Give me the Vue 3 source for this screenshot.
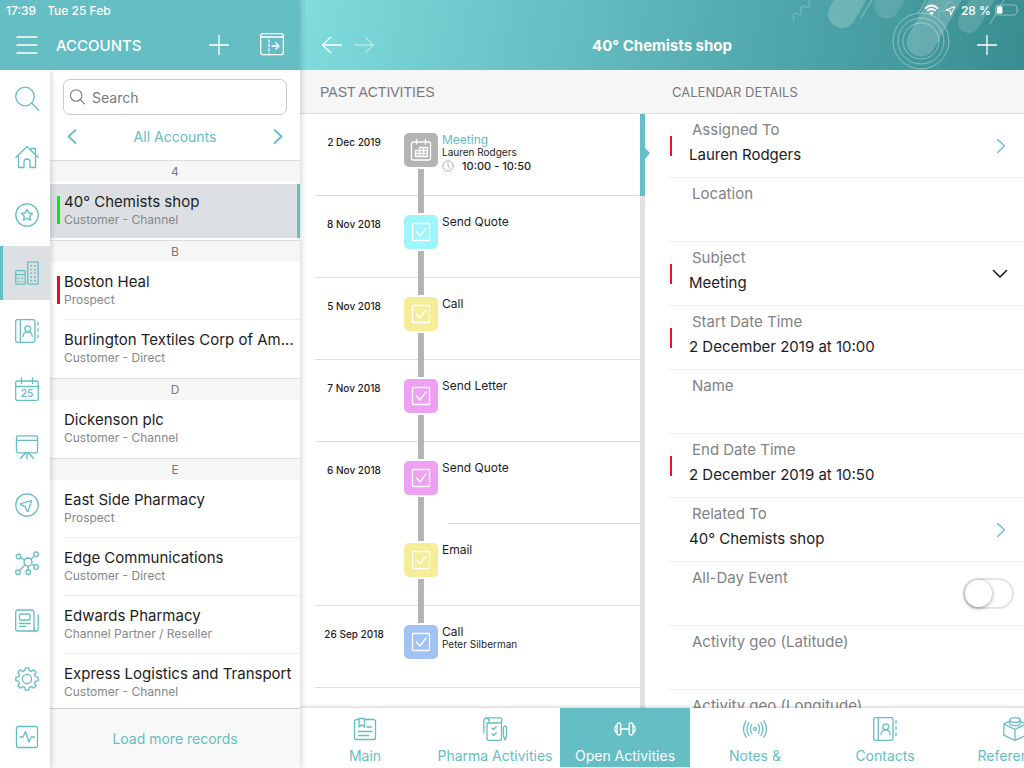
<script setup>
import { ref } from 'vue'

const icons = {
  menu: '<path d="M2 4h20M2 12h20M2 20h20"/>',
  plus: '<path d="M12 2.500v19M2.500 12h19"/>',
  panel: '<rect x=".7" y=".7" width="22.600" height="21" rx="2"/><path d="M1 4h22"/><path d="M9 7v15" stroke-dasharray="2 2.500"/><path d="M12 13h7M15.800 9.800l3.200 3.200-3.200 3.200"/>',
  search: '<circle cx="10" cy="9.500" r="9.300"/><path d="M16.700 16.300l7 7"/>',
  home: '<path d="M.8 12.500L12 1.500l11.200 11M16 5l0-1.500h4.500v5.500M3.500 11.500v11h5.500v-5.500a3 3 0 0 1 6 0v5.500h5.500v-11"/>',
  star: '<circle cx="12" cy="12" r="11.200"/><path d="M12 6.400l1.700 3.600 3.900.5-2.900 2.700.8 3.900-3.500-1.900-3.500 1.900.8-3.900-2.900-2.700 3.900-.5z"/>',
  offices: '<rect x=".8" y="9.600" width="9.400" height="13.600" rx="1"/><path d="M1 13.600h9"/><rect x="12.800" y=".8" width="10.400" height="22.400" rx="1"/><path d="M3.700 16.600v4.500M7.300 16.600v4.500" stroke-dasharray="1.600 1.800" stroke-width="1.700" stroke-linecap="butt"/><path d="M16.200 4v16.500M19.900 4v16.500" stroke-dasharray="1.600 2.100" stroke-width="1.700" stroke-linecap="butt"/>',
  contacts: '<rect x=".7" y=".7" width="19.300" height="22.600" rx="1.800"/><path d="M5.300 1v22"/><circle cx="12.700" cy="9.700" r="2.900"/><path d="M8.200 17.500c0-6.200 9-6.200 9 0"/><path d="M23 3.300v3M23 9.600v3M23 16v2.500"/>',
  calendar: '<rect x=".7" y="4" width="22.600" height="19.300" rx="1.500"/><path d="M1 9.500h22M6.500 1v5.500M17.500 1v5.500"/><text x="12" y="19.800" text-anchor="middle" font-size="10" font-weight="600" stroke="none" fill="currentColor">25</text>',
  board: '<rect x="1.500" y=".8" width="21" height="17" rx="1.500"/><path d="M1.500 5.300h21M12 18v6M10.500 18l-5 5.500M13.500 18l5 5.500"/>',
  compass: '<circle cx="12" cy="12" r="11.200"/><path d="M16.500 7.500L5.800 10.700q-.8.500 0 1l4.400 2 2 4.400q.5.800 1 0z"/>',
  network: '<circle cx="13" cy="11" r="4"/><circle cx="3.500" cy="5.500" r="2.300"/><circle cx="21" cy="3.300" r="2.400"/><circle cx="21" cy="16" r="2.300"/><circle cx="2.900" cy="21.200" r="2.300"/><circle cx="13.300" cy="21.200" r="2.300"/><path d="M5.500 6.700l4 2.300M16 8.300l3.200-3.200M16.500 13l2.700 1.800M4.500 19.500l5.700-5.700M13.100 15v4"/>',
  news: '<path d="M19 20V3a2 2 0 0 0-2-2H2.700a2 2 0 0 0-2 2v17a2 2 0 0 0 2 2h18.500a2 2 0 0 0 2-2V6"/><path d="M19 19.500q0 2.500 2 2.500"/><rect x="4.500" y="5" width="10.500" height="6" rx="1"/><path d="M4.500 14.500h10.800M4.500 17.500h6"/>',
  gear: '<circle cx="12" cy="12" r="4.600"/><path d="M9.700 3.600L10.400 .8h3.200l.7 2.800 2 .8 2.500-1.500 2.300 2.300-1.500 2.500.8 2 2.800.7v3.200l-2.800.7-.8 2 1.500 2.500-2.300 2.300-2.500-1.500-2 .8-.7 2.800h-3.200l-.7-2.800-2-.8-2.500 1.500-2.300-2.300 1.500-2.500-.8-2L.8 13.600v-3.200l2.800-.7.8-2-1.500-2.500 2.300-2.300 2.500 1.500z"/>',
  pulse: '<rect x="1.500" y="1.500" width="21" height="21" rx="1.500"/><path d="M5 12h3l2.500-5.500 3.500 10.500 2.200-5H19.500"/>',
  prev: '<path d="M15.500 6l-7 6.500 7 6.500" stroke-width="1.800"/>',
  next: '<path d="M8.500 6l7 6.500-7 6.500" stroke-width="1.800"/>',
  thinNext: '<path d="M9.500 5.500l7 6.500-7 6.500"/>',
  down: '<path d="M5.500 8.500l6.500 6.500 6.500-6.500" stroke-width="1.600"/>',
  back: '<path d="M21.500 12h-19M10.500 4.500L2.500 12l8 7.500"/>',
  forward: '<path d="M2.500 12h19M13.500 4.500l8 7.500-8 7.500"/>',
  main: '<path d="M5.500 2.500H3.500a2 2 0 0 0-2 2v16a2 2 0 0 0 2 2h17a2 2 0 0 0 2-2v-16a2 2 0 0 0-2-2h-9"/><path d="M6 1.500h5.500V10L8.800 7.800 6 10zM14 10h4.500M5.500 14.500h13.500M5.500 18.500h10"/>',
  pharma: '<path d="M.8 16V4a3.200 3.200 0 0 1 3.200-3.200h13a2 2 0 0 1 2 2c0 2.700-2 3.200-3.500 3.200H4M4 6V21.500a1.800 1.800 0 0 0 1.800 1.800h10.900a1.800 1.800 0 0 0 1.800-1.800V5.500M4 6c3 0 3-4.500 0-4.500"/><path d="M9 11l1.500 1.500 2.700-2.700M9 17l1.500 1.500 2.700-2.700M20.500 19v-8q0-2 1.500-2t1.500 2v8L22 23z"/>',
  dumbbell: '<rect x="4" y="6" width="3.800" height="12" rx="1.800"/><rect x="16.200" y="6" width="3.800" height="12" rx="1.800"/><path d="M7.800 12h8.400M4 9H2.500q-1.500 3 0 6H4M20 9h1.500q1.500 3 0 6H20"/>',
  signal: '<circle cx="12" cy="12" r="1.500"/><path d="M8.800 7.500q-2.800 4.500 0 9M15.200 7.500q2.800 4.500 0 9M6 5.500q-4 6.500 0 13M18 5.500q4 6.500 0 13M3 3.800q-5 8.200 0 16.400M21 3.800q5 8.200 0 16.400"/>',
  brick: '<path d="M6.500 4.300L.8 7v11.200L12 23.500l11.200-5.300V7l-5.700-2.700M.8 7L12 12.300 23.200 7M12 12.300v11.200"/><ellipse cx="12" cy="3" rx="5.200" ry="2.300"/><path d="M6.800 3v3.200c0 3.200 10.400 3.200 10.400 0V3"/>',
  event: '<rect x="2.500" y="4" width="19" height="18" rx="1.500"/><path d="M7.500 1.500V6M16.500 1.500V6"/><path d="M10.500 9.500h8v9h-12v-6h12M10.500 9.500v9M14.500 9.500v9M6.500 15.500h12"/>',
  task: '<rect x="3.500" y="3.500" width="17" height="17" rx=".8"/><path d="M7.500 12l3.500 4 6-8"/>',
  clock: '<circle cx="12" cy="12" r="10.500"/><path d="M12 5v7l4 5"/>'
}

const rail = [
  ['search', 'Search'], ['home', 'Home'], ['star', 'Favourites'], ['offices', 'Accounts'],
  ['contacts', 'Contacts'], ['calendar', 'Calendar'], ['board', 'Presentations'], ['compass', 'Nearby'],
  ['network', 'Network'], ['news', 'News'], ['gear', 'Settings'], ['pulse', 'Activity']
]

const groups = [
  { letter: '4', items: [{ name: '40° Chemists shop', type: 'Customer - Channel', flag: 'green', active: true }] },
  { letter: 'B', items: [
    { name: 'Boston Heal', type: 'Prospect', flag: 'red' },
    { name: 'Burlington Textiles Corp of America', type: 'Customer - Direct' }
  ] },
  { letter: 'D', items: [{ name: 'Dickenson plc', type: 'Customer - Channel' }] },
  { letter: 'E', items: [
    { name: 'East Side Pharmacy', type: 'Prospect' },
    { name: 'Edge Communications', type: 'Customer - Direct' },
    { name: 'Edwards Pharmacy', type: 'Channel Partner / Reseller' },
    { name: 'Express Logistics and Transport', type: 'Customer - Channel' }
  ] }
]

const activities = [
  { date: '2 Dec 2019', title: 'Meeting', who: 'Lauren Rodgers', time: '10:00 - 10:50', tone: 'grey', icon: 'event', active: true },
  { date: '8 Nov 2018', title: 'Send Quote', tone: 'cyan', icon: 'task' },
  { date: '5 Nov 2018', title: 'Call', tone: 'yellow', icon: 'task' },
  { date: '7 Nov 2018', title: 'Send Letter', tone: 'pink', icon: 'task' },
  { date: '6 Nov 2018', title: 'Send Quote', tone: 'pink', icon: 'task', grouped: true },
  { date: '', title: 'Email', tone: 'yellow', icon: 'task' },
  { date: '26 Sep 2018', title: 'Call', who: 'Peter Silberman', tone: 'blue', icon: 'task' }
]

const fields = ref([
  { id: 'assigned', label: 'Assigned To', value: 'Lauren Rodgers', required: true, kind: 'lookup' },
  { id: 'location', label: 'Location', value: '' },
  { id: 'subject', label: 'Subject', value: 'Meeting', required: true, kind: 'select' },
  { id: 'start', label: 'Start Date Time', value: '2 December 2019 at 10:00', required: true },
  { id: 'name', label: 'Name', value: '' },
  { id: 'end', label: 'End Date Time', value: '2 December 2019 at 10:50', required: true },
  { id: 'related', label: 'Related To', value: '40° Chemists shop', kind: 'lookup' },
  { id: 'allday', label: 'All-Day Event', value: false, kind: 'toggle' },
  { id: 'lat', label: 'Activity geo (Latitude)', value: '' },
  { id: 'lng', label: 'Activity geo (Longitude)', value: '' }
])

const tabs = [
  ['main', 'Main'], ['pharma', 'Pharma Activities'], ['dumbbell', 'Open Activities'],
  ['signal', 'Notes &'], ['contacts', 'Contacts'], ['brick', 'References']
]
const query = ref('')
</script>

<template>
  <div class="app">
    <section class="side">
      <header class="side-head">
        <div class="status"><span>17:39</span><span>Tue 25 Feb</span></div>
        <div class="side-bar">
          <button class="bare" aria-label="Menu"><svg class="ico" viewBox="0 0 24 24" v-html="icons.menu" /></button>
          <h1>ACCOUNTS</h1>
          <button class="bare" aria-label="Add account"><svg class="ico" viewBox="0 0 24 24" v-html="icons.plus" /></button>
          <button class="bare" aria-label="Toggle panel"><svg class="ico" viewBox="0 0 24 24" v-html="icons.panel" /></button>
        </div>
      </header>
      <div class="side-body">
        <nav class="rail">
          <button v-for="[icon, label] in rail" :key="label" class="bare rail-item" :class="{ active: icon === 'offices' }" :aria-label="label">
            <svg class="ico" viewBox="0 0 24 24" v-html="icons[icon]" />
          </button>
        </nav>
        <div class="list">
          <label class="search">
            <svg class="ico small" viewBox="0 -1 26 26" v-html="icons.search" />
            <input v-model="query" type="search" placeholder="Search" aria-label="Search accounts">
          </label>
          <div class="filter">
            <button class="bare" aria-label="Previous view"><svg class="ico" viewBox="0 0 24 24" v-html="icons.prev" /></button>
            <a href="#">All Accounts</a>
            <button class="bare" aria-label="Next view"><svg class="ico" viewBox="0 0 24 24" v-html="icons.next" /></button>
          </div>
          <div class="records">
            <section v-for="g in groups" :key="g.letter">
              <h2>{{ g.letter }}</h2>
              <a v-for="a in g.items" :key="a.name" href="#" class="record" :class="[a.flag, { active: a.active }]">
                <strong>{{ a.name }}</strong>
                <span>{{ a.type }}</span>
              </a>
            </section>
          </div>
          <footer class="more"><a href="#">Load more records</a></footer>
        </div>
      </div>
    </section>

    <main class="content">
      <header class="top">
        <svg class="decor" viewBox="0 0 234 70" aria-hidden="true">
          <g stroke="#fff" stroke-linecap="round" fill="none">
            <path d="M52 14L74-24" stroke-width="28" opacity=".2" />
            <path d="M97 6L115-24" stroke-width="25" opacity=".12" />
            <path d="M131 42L169-24" stroke-width="29" opacity=".2" />
            <path d="M179 22L206-24" stroke-width="22" opacity=".15" />
            <g opacity=".4">
              <circle cx="131" cy="41" r="28" /><circle cx="131" cy="41" r="23" /><circle cx="131" cy="41" r="18" />
              <path d="M71 18L83-2M200 24L215-2M128 14L138-4" />
              <path d="M4 20c-2-5 1-8 4-6s4-1 3-4 2-5 5-3 4-2 3-7" opacity=".7" />
              <path d="M149 16c-2-5 1-6 4-5s4-1 3-4 2-5 5-5" opacity=".6" />
            </g>
          </g>
        </svg>
        <div class="status right">
          <svg class="wifi" viewBox="0 0 16 12"><path d="M1 4.500q7-6.500 14 0M3.500 7q4.500-4.200 9 0" fill="none" stroke="#fff" stroke-width="2" /><path d="M5.500 9q2.500-2.200 5 0L8 11.500z" fill="#fff" /></svg>
          <svg class="loc" viewBox="0 0 12 12"><path d="M10.500 1.500L1 5.800l4.700.5.500 4.700z" fill="none" stroke="#fff" stroke-width="1.100" stroke-linejoin="round" /></svg>
          <span>28 %</span>
          <svg class="battery" viewBox="0 0 27 12"><rect x=".5" y=".5" width="23" height="11" rx="3" fill="none" stroke="#fff" opacity=".45" /><rect x="2" y="2" width="6" height="8" rx="1.500" fill="#fff" /><path d="M25 4v4q2-2 0-4" fill="#fff" opacity=".5" /></svg>
        </div>
        <div class="top-bar">
          <div class="arrows">
            <button class="bare" aria-label="Back"><svg class="ico" viewBox="0 0 24 24" v-html="icons.back" /></button>
            <button class="bare dim" aria-label="Forward"><svg class="ico" viewBox="0 0 24 24" v-html="icons.forward" /></button>
          </div>
          <h1>40° Chemists shop</h1>
          <button class="bare add" aria-label="Add"><svg class="ico" viewBox="0 0 24 24" v-html="icons.plus" /></button>
        </div>
      </header>

      <div class="panels">
        <section class="past">
          <h2 class="caption light">PAST ACTIVITIES</h2>
          <div class="timeline">
            <article v-for="(a, i) in activities" :key="i" class="activity" :class="{ active: a.active, grouped: a.grouped }">
              <time>{{ a.date }}</time>
              <div class="track">
                <span class="badge" :class="a.tone"><svg class="ico" viewBox="0 0 24 24" v-html="icons[a.icon]" /></span>
                <i v-if="i < activities.length - 1" class="link" />
              </div>
              <div class="what">
                <h3>{{ a.title }}</h3>
                <p v-if="a.who">{{ a.who }}</p>
                <p v-if="a.time" class="time"><svg class="ico" viewBox="0 0 24 24" v-html="icons.clock" />{{ a.time }}</p>
              </div>
            </article>
          </div>
        </section>

        <section class="details">
          <h2 class="caption">CALENDAR DETAILS</h2>
          <form class="fields">
            <div v-for="f in fields" :key="f.id" class="field" :class="{ required: f.required }">
              <div class="pair">
                <label :for="f.id">{{ f.label }}</label>
                <select v-if="f.kind === 'select'" :id="f.id" v-model="f.value"><option>Meeting</option><option>Call</option><option>Email</option></select>
                <input v-else-if="f.kind !== 'toggle'" :id="f.id" v-model="f.value" type="text">
              </div>
              <input v-if="f.kind === 'toggle'" :id="f.id" v-model="f.value" type="checkbox" class="switch">
              <button v-if="f.kind === 'lookup'" type="button" class="bare" :aria-label="'Choose ' + f.label"><svg class="ico" viewBox="0 0 24 24" v-html="icons.thinNext" /></button>
              <svg v-if="f.kind === 'select'" class="ico dark" viewBox="0 0 24 24" v-html="icons.down" />
            </div>
          </form>
        </section>
      </div>

      <nav class="tabs">
        <button v-for="[icon, label] in tabs" :key="label" class="bare tab" :class="{ active: icon === 'dumbbell' }">
          <svg class="ico" viewBox="0 0 24 24" v-html="icons[icon]" />
          <span>{{ label }}</span>
        </button>
      </nav>
    </main>
  </div>
</template>

<style>
body { margin: 0; overflow: hidden; }
</style>

<style scoped>
* { box-sizing: border-box; }
.app {
  --teal: #64bec3;
  display: grid;
  grid-template-columns: 300px minmax(0, 1fr);
  height: 100vh;
  font-family: Inter, "Liberation Sans", sans-serif;
  color: #1c1c1e;
  background: #fff;
}
h1, h2, h3, p { margin: 0; font-weight: 400; }
a { color: inherit; text-decoration: none; }
.bare { padding: 0; border: 0; background: none; color: inherit; font: inherit; display: grid; place-items: center; cursor: pointer; }
.ico { width: 24px; height: 24px; display: block; fill: none; stroke: currentColor; stroke-width: 1.3; stroke-linecap: round; stroke-linejoin: round; overflow: visible; }

.side, .content { display: flex; flex-direction: column; min-width: 0; min-height: 0; }
.side { position: relative; z-index: 2; box-shadow: 2px 0 5px rgba(0, 0, 0, .14); background: #fff; }
.side-head { position: relative; z-index: 2; flex: none; height: 70px; background: var(--teal); color: #fff; }
.status { display: flex; gap: 11px; height: 20px; padding-left: 6px; align-items: center; font-size: 12px; font-weight: 500; }
.side-bar { display: flex; align-items: center; height: 50px; padding: 0 16px 0 15px; }
.side-bar h1 { flex: 1; margin-left: 17px; font-size: 15px; font-weight: 500; }
.side-bar .bare + .bare { margin-left: 29px; }

.side-body { flex: 1; display: flex; min-height: 0; }
.rail { position: relative; z-index: 1; flex: none; width: 50px; color: var(--teal); background: #fff; box-shadow: 2px 0 5px rgba(0, 0, 0, .14); clip-path: inset(0 -10px 0 0); }
.rail-item { width: 50px; height: 54px; margin: 2px 0 4px; padding-left: 4px; }
.rail-item.active { background: #dce0e3; padding-left: 1px; border-left: 3px solid var(--teal); }

.list { flex: 1; min-width: 0; display: flex; flex-direction: column; }
.search { flex: none; display: flex; align-items: center; gap: 6px; height: 36px; margin: 9px 13px 0; padding: 0 6px; border: 1px solid #c7c9cb; border-radius: 7px; color: #77797c; }
.search .small { width: 16px; height: 16px; stroke-width: 1.8; }
.search input { flex: 1; min-width: 0; border: 0; outline: 0; padding: 0; font: inherit; font-size: 14px; background: none; }
.search input::placeholder { color: #77797c; opacity: 1; }
.filter { flex: none; display: flex; justify-content: space-between; align-items: center; height: 45px; padding: 0 10px 3px; color: var(--teal); font-size: 14px; }
.records { flex: 1; min-height: 0; overflow: hidden; }
.records h2 { height: 22px; line-height: 23px; text-align: center; font-size: 12px; color: #77797c; background: #f6f6f6; box-shadow: inset 0 1px #dedede; }
.record { position: relative; display: flex; flex-direction: column; height: 58px; margin-left: 14px; padding: 10px 3px 0 0; border-bottom: 1px solid #eee; }
.record:last-child { border-bottom-color: transparent; }
.record strong { font-size: 15px; line-height: 20px; font-weight: 400; overflow: hidden; text-overflow: ellipsis; white-space: nowrap; }
.record span { font-size: 12px; line-height: 15px; color: #85878a; }
.record.active { height: 54px; margin: 2px 0; padding: 8px 4px 0 14px; background: #dce0e3; border: 0; border-right: 3px solid var(--teal); }
.record.green::before, .record.red::before { content: ""; position: absolute; left: -7px; top: 14px; width: 3px; height: 28px; background: #e01020; }
.record.green::before { left: 7px; top: 12px; background: #00ea14; }
.more { flex: none; display: grid; place-items: center; height: 60px; border-top: 1px solid #d0d0d0; background: #f8f8f8; color: var(--teal); font-size: 14px; }

.top { position: relative; flex: none; height: 70px; color: #fff; background: linear-gradient(100deg, #80dcdd 0%, #5bb3b7 50%, #388d90 100%); overflow: hidden; }
.decor { position: absolute; right: 0; top: 0; width: 234px; height: 70px; }
.status.right { position: relative; justify-content: flex-end; gap: 4px; padding-right: 4px; }
.wifi { width: 15px; height: 12px; }
.loc { width: 11px; height: 11px; margin: 0 1px 0 2px; }
.battery { width: 25px; height: 12px; }
.top-bar { position: relative; display: grid; grid-template-columns: 1fr auto 1fr; align-items: center; height: 50px; padding: 0 20px; }
.top-bar h1 { font-size: 15px; font-weight: 700; }
.arrows { display: flex; gap: 8px; }
.dim { opacity: .45; }
.add { justify-self: end; margin-right: 5px; }

.panels { flex: 1; min-height: 0; display: grid; grid-template-columns: minmax(0, 345fr) minmax(0, 379fr); }
.past, .details { display: flex; flex-direction: column; min-height: 0; }
.caption { flex: none; height: 44px; line-height: 45px; padding-left: 27px; border-bottom: 1px solid #dedede; background: #f6f6f6; color: #77797c; font-size: 13px; }
.caption.light { padding-left: 20px; font-family: "Liberation Sans", sans-serif; font-size: 14px; }
.timeline { flex: 1; min-height: 0; padding-left: 15px; background: linear-gradient(#e1e1e4, #e1e1e4) right / 5px 100% no-repeat; }
.activity { position: relative; display: grid; grid-template-columns: 89px 38px minmax(0, 1fr); height: 82px; margin-right: 5px; border-bottom: 1px solid #dedede; }
.activity.grouped { border-bottom-color: transparent; }
.activity.grouped::before { content: ""; position: absolute; left: 133px; right: 0; bottom: -1px; height: 1px; background: #dedede; }
.activity.active::after { content: ""; position: absolute; left: 100%; top: 0; width: 10px; height: 82px; background: var(--teal); clip-path: polygon(0 0, 50% 0, 50% 34px, 100% 39px, 50% 45px, 50% 100%, 0 100%); }
.activity time { padding: 20px 11px 0 0; font-size: 10px; line-height: 16px; text-align: center; font-weight: 500; }
.badge { display: grid; place-items: center; width: 34px; height: 34px; margin-top: 19px; border-radius: 5px; color: #fff; }
.grey { background: #b4b4b4; }
.cyan { background: #9ef6fc; }
.yellow { background: #f5ed98; }
.pink { background: #eea0f2; }
.blue { background: #a2c2f3; }
.link { position: absolute; z-index: 1; width: 6px; height: 44px; margin: 2px 0 0 14px; background: #b4b4b4; }
.what { padding-top: 18px; }
.what h3 { font-size: 12px; line-height: 15px; }
.what p { font-size: 10px; line-height: 10px; }
.active h3 { color: var(--teal); }
.what .time { display: flex; align-items: center; gap: 8px; margin-top: 1px; font-size: 11px; line-height: 16px; font-weight: 500; }
.time .ico { width: 12px; height: 12px; color: #b4b4b4; stroke-width: 2; }

.fields { flex: 1; min-height: 0; overflow: hidden; }
.field { position: relative; display: flex; align-items: center; height: 64px; margin-left: 22px; padding-right: 12px; border-bottom: 1px solid #f0f0f0; }
.field.required::before { content: ""; position: absolute; left: 3px; top: 22px; width: 2px; height: 20px; background: #f5121c; }
.pair { flex: 1; min-width: 0; align-self: flex-start; display: flex; flex-direction: column; padding: 6px 0 0 22px; }
.pair label { padding-left: 3px; font-size: 15px; line-height: 20px; color: #808285; }
.pair input, .pair select { appearance: none; width: 100%; height: 20px; margin-top: 4px; padding: 0; border: 0; outline: 0; background: none; color: #1c1c1e; font: inherit; font-size: 15px; }
.field .bare { color: var(--teal); }
.dark { color: #1c1c1e; }
.switch { appearance: none; position: relative; width: 51px; height: 31px; margin: 0 -2px 0 0; border: 2px solid #e4e4e4; border-radius: 16px; background: #fff; }
.switch::before { content: ""; position: absolute; left: 0; top: 0; width: 27px; height: 27px; border-radius: 50%; background: #fff; box-shadow: 0 1px 4px rgba(0, 0, 0, .4); }
.switch:checked { background: var(--teal); }
.switch:checked::before { left: 20px; }

.tabs { position: relative; z-index: 1; flex: none; display: flex; height: 60px; overflow: hidden; background: #fff; color: var(--teal); box-shadow: 0 -1px 3px rgba(0, 0, 0, .2); clip-path: inset(-6px 0 0 0); }
.tab { flex: none; width: 130px; align-content: start; padding-top: 9px; gap: 5px; border-bottom: 1px solid #fff; }
.tab span { font-size: 14px; line-height: 20px; white-space: nowrap; }
.tab.active { background: var(--teal); color: #fff; }
</style>
